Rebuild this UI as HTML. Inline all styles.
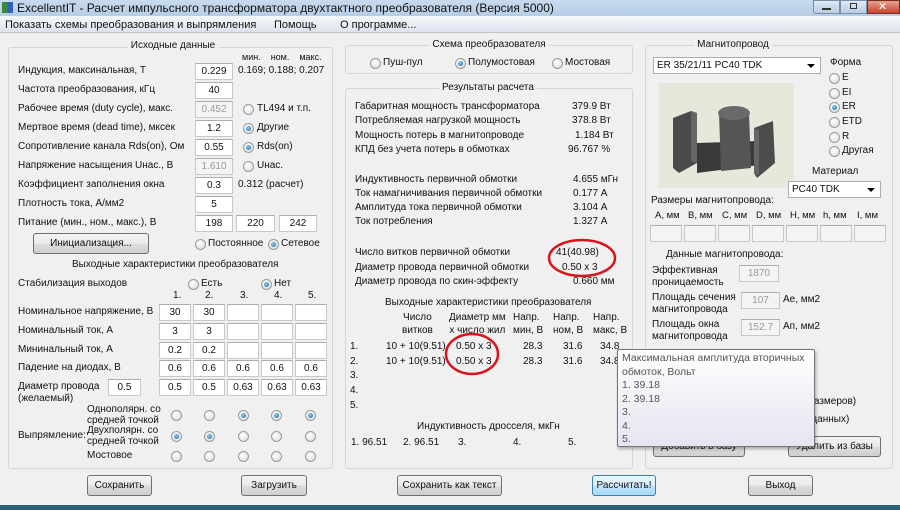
<!DOCTYPE html>
<html><head><meta charset="utf-8"><style>
*{margin:0;padding:0;box-sizing:border-box}
body{width:900px;height:510px;position:relative;overflow:hidden;background:#f0f0f0;font-family:"Liberation Sans","DejaVu Sans",sans-serif;font-size:10px;color:#111}
.a{position:absolute;white-space:nowrap;line-height:14px;font-size:10px}
.in{position:absolute;height:17px;background:#fff;border:1px solid #c8c8c8;border-top-color:#adadad;text-align:center;line-height:15px;font-size:10px;white-space:nowrap}
.dis{color:#999;background:#f4f4f4}
.r{position:absolute;width:11px;height:11px;border-radius:50%;border:1px solid #9a9a9a;background:radial-gradient(circle at 40% 35%,#fff,#d8d8d8)}
.r.on::after{content:"";position:absolute;left:2px;top:2px;width:5px;height:5px;border-radius:50%;background:radial-gradient(circle at 40% 35%,#8fd0f5,#1a5f9a)}
.g{position:absolute;border:1px solid #d5d5d5;border-radius:3px}
.gt{position:absolute;background:#f0f0f0;padding:0 3px;line-height:14px;white-space:nowrap;transform:translateX(-50%);font-size:10px}
.btn{position:absolute;height:21px;border:1px solid #707070;border-radius:3px;background:linear-gradient(#f2f2f2 0%,#ebebeb 50%,#dddddd 51%,#cfcfcf 100%);text-align:center;line-height:19px;font-size:10px;white-space:nowrap}
.cb{position:absolute;height:17px;background:#fff;border:1px solid #abadb3;line-height:15px;padding-left:3px;font-size:10px;white-space:nowrap}
.cb::after{content:"";position:absolute;right:5px;top:6px;border:4px solid transparent;border-top:4px solid #000}
</style></head><body>
<!-- title bar -->
<div style="position:absolute;left:0;top:0;width:900px;height:16px;background:linear-gradient(#c9dbee,#b5cde6)"></div>
<div style="position:absolute;left:2px;top:2px;width:11px;height:11px;background:linear-gradient(90deg,#3a8a3a 50%,#3060c0 50%)"></div>
<div class="a" style="left:17px;top:1px;font-size:12px">ExcellentIT - Расчет импульсного трансформатора двухтактного преобразователя (Версия 5000)</div>
<div style="position:absolute;left:813px;top:0;width:27px;height:14px;border:1px solid #7890a8;border-radius:0 0 0 3px;background:linear-gradient(#dfe9f5,#b8cce2)"></div>
<div style="position:absolute;left:822px;top:8px;width:9px;height:2px;background:#333"></div>
<div style="position:absolute;left:840px;top:0;width:27px;height:14px;border:1px solid #7890a8;background:linear-gradient(#dfe9f5,#b8cce2)"></div>
<div style="position:absolute;left:850px;top:3px;width:7px;height:6px;border:1px solid #333"></div>
<div style="position:absolute;left:867px;top:0;width:33px;height:14px;border:1px solid #7a2b20;background:linear-gradient(#e8a090,#c8442e)"></div>
<div class="a" style="left:878px;top:0;color:#fff;font-weight:bold;font-size:11px">✕</div>
<!-- menu -->
<div style="position:absolute;left:0;top:16px;width:900px;height:17px;background:linear-gradient(#f5f7fb,#dde3ef);border-bottom:1px solid #c0c4cc"></div>
<div class="a" style="left:5px;top:18px;font-size:11px">Показать схемы преобразования и выпрямления</div>
<div class="a" style="left:274px;top:18px;font-size:11px">Помощь</div>
<div class="a" style="left:340px;top:18px;font-size:11px">О программе...</div>

<!-- LEFT -->
<div class="g" style="left:8px;top:47px;width:325px;height:422px"></div>
<div class="gt" style="left:173px;top:39px">Исходные данные</div>
<div class="a" style="left:242px;top:50px;font-size:9px">мин.&nbsp;&nbsp;&nbsp;&nbsp;ном.&nbsp;&nbsp;&nbsp;&nbsp;макс.</div>
<div class="a" style="left:18px;top:64px">Индукция, максинальная, Т</div>
<div class="a" style="left:18px;top:83px">Частота преобразования, кГц</div>
<div class="a" style="left:18px;top:102px">Рабочее время (duty cycle), макс.</div>
<div class="a" style="left:18px;top:121px">Мертвое время (dead time), мксек</div>
<div class="a" style="left:18px;top:140px">Сопротивление канала Rds(on), Ом</div>
<div class="a" style="left:18px;top:159px">Напряжение насыщения Uнас., В</div>
<div class="a" style="left:18px;top:178px">Коэффициент заполнения окна</div>
<div class="a" style="left:18px;top:197px">Плотность тока, А/мм2</div>
<div class="a" style="left:18px;top:216px">Питание (мин., ном., макс.), В</div>
<div class="in" style="left:195px;top:63px;width:38px">0.229</div>
<div class="in" style="left:195px;top:82px;width:38px">40</div>
<div class="in dis" style="left:195px;top:101px;width:38px">0.452</div>
<div class="in" style="left:195px;top:120px;width:38px">1.2</div>
<div class="in" style="left:195px;top:139px;width:38px">0.55</div>
<div class="in dis" style="left:195px;top:158px;width:38px">1.610</div>
<div class="in" style="left:195px;top:177px;width:38px">0.3</div>
<div class="in" style="left:195px;top:196px;width:38px">5</div>
<div class="in" style="left:195px;top:215px;width:38px">198</div>
<div class="in" style="left:236px;top:215px;width:39px">220</div>
<div class="in" style="left:279px;top:215px;width:38px">242</div>
<div class="a" style="left:238px;top:64px">0.169; 0.188; 0.207</div>
<div class="r" style="left:243px;top:104px"></div><div class="a" style="left:257px;top:102px">TL494 и т.п.</div>
<div class="r on" style="left:243px;top:123px"></div><div class="a" style="left:257px;top:121px">Другие</div>
<div class="r on" style="left:243px;top:142px"></div><div class="a" style="left:257px;top:140px">Rds(on)</div>
<div class="r" style="left:243px;top:161px"></div><div class="a" style="left:257px;top:159px">Uнас.</div>
<div class="a" style="left:238px;top:178px">0.312 (расчет)</div>
<div class="btn" style="left:33px;top:233px;width:116px">Инициализация...</div>
<div class="r" style="left:195px;top:239px"></div><div class="a" style="left:208px;top:237px">Постоянное</div>
<div class="r on" style="left:268px;top:239px"></div><div class="a" style="left:281px;top:237px">Сетевое</div>
<div class="a" style="left:72px;top:258px">Выходные характеристики преобразователя</div>
<div class="a" style="left:18px;top:277px">Стабилизация выходов</div>
<div class="r" style="left:188px;top:279px"></div><div class="a" style="left:201px;top:277px">Есть</div>
<div class="r on" style="left:261px;top:279px"></div><div class="a" style="left:274px;top:277px">Нет</div>
<div class="a" style="left:173px;top:289px">1.</div><div class="a" style="left:205px;top:289px">2.</div><div class="a" style="left:240px;top:289px">3.</div><div class="a" style="left:274px;top:289px">4.</div><div class="a" style="left:308px;top:289px">5.</div>
<div class="a" style="left:18px;top:305px">Номинальное напряжение, В</div>
<div class="a" style="left:18px;top:324px">Номинальный ток, А</div>
<div class="a" style="left:18px;top:343px">Мининальный ток, А</div>
<div class="a" style="left:18px;top:361px">Падение на диодах, В</div>
<div class="a" style="left:18px;top:380px">Диаметр провода</div>
<div class="a" style="left:18px;top:392px">(желаемый)</div>
<div class="in" style="left:108px;top:379px;width:33px">0.5</div>
<div class="in" style="left:159px;top:304px;width:32px">30</div><div class="in" style="left:193px;top:304px;width:32px">30</div><div class="in" style="left:227px;top:304px;width:32px"></div><div class="in" style="left:261px;top:304px;width:32px"></div><div class="in" style="left:295px;top:304px;width:32px"></div>
<div class="in" style="left:159px;top:323px;width:32px">3</div><div class="in" style="left:193px;top:323px;width:32px">3</div><div class="in" style="left:227px;top:323px;width:32px"></div><div class="in" style="left:261px;top:323px;width:32px"></div><div class="in" style="left:295px;top:323px;width:32px"></div>
<div class="in" style="left:159px;top:342px;width:32px">0.2</div><div class="in" style="left:193px;top:342px;width:32px">0.2</div><div class="in" style="left:227px;top:342px;width:32px"></div><div class="in" style="left:261px;top:342px;width:32px"></div><div class="in" style="left:295px;top:342px;width:32px"></div>
<div class="in" style="left:159px;top:360px;width:32px">0.6</div><div class="in" style="left:193px;top:360px;width:32px">0.6</div><div class="in" style="left:227px;top:360px;width:32px">0.6</div><div class="in" style="left:261px;top:360px;width:32px">0.6</div><div class="in" style="left:295px;top:360px;width:32px">0.6</div>
<div class="in" style="left:159px;top:379px;width:32px">0.5</div><div class="in" style="left:193px;top:379px;width:32px">0.5</div><div class="in" style="left:227px;top:379px;width:32px">0.63</div><div class="in" style="left:261px;top:379px;width:32px">0.63</div><div class="in" style="left:295px;top:379px;width:32px">0.63</div>
<div class="a" style="left:87px;top:404px;line-height:11px">Однополярн. со<br>средней точкой</div>
<div class="a" style="left:87px;top:425px;line-height:11px">Двухполярн. со<br>средней точкой</div>
<div class="a" style="left:18px;top:429px">Выпрямление:</div>
<div class="a" style="left:87px;top:449px">Мостовое</div>
<div class="r" style="left:171px;top:410px"></div><div class="r" style="left:204px;top:410px"></div><div class="r on" style="left:238px;top:410px"></div><div class="r on" style="left:271px;top:410px"></div><div class="r on" style="left:305px;top:410px"></div>
<div class="r on" style="left:171px;top:431px"></div><div class="r on" style="left:204px;top:431px"></div><div class="r" style="left:238px;top:431px"></div><div class="r" style="left:271px;top:431px"></div><div class="r" style="left:305px;top:431px"></div>
<div class="r" style="left:171px;top:451px"></div><div class="r" style="left:204px;top:451px"></div><div class="r" style="left:238px;top:451px"></div><div class="r" style="left:271px;top:451px"></div><div class="r" style="left:305px;top:451px"></div>
<div class="btn" style="left:87px;top:475px;width:65px">Сохранить</div>
<div class="btn" style="left:241px;top:475px;width:66px">Загрузить</div>

<!-- MIDDLE -->
<div class="g" style="left:345px;top:45px;width:288px;height:29px"></div>
<div class="gt" style="left:489px;top:38px">Схема преобразователя</div>
<div class="r" style="left:370px;top:58px"></div><div class="a" style="left:383px;top:56px">Пуш-пул</div>
<div class="r on" style="left:455px;top:58px"></div><div class="a" style="left:468px;top:56px">Полумостовая</div>
<div class="r" style="left:552px;top:58px"></div><div class="a" style="left:565px;top:56px">Мостовая</div>
<div class="g" style="left:345px;top:88px;width:288px;height:381px"></div>
<div class="gt" style="left:488px;top:81px">Результаты расчета</div>
<div class="a" style="left:355px;top:100px">Габаритная мощность трансформатора</div><div class="a" style="left:572px;top:100px">379.9 Вт</div>
<div class="a" style="left:355px;top:114px">Потребляемая нагрузкой мощность</div><div class="a" style="left:572px;top:114px">378.8 Вт</div>
<div class="a" style="left:355px;top:129px">Мощность потерь в магнитопроводе</div><div class="a" style="left:575px;top:129px">1.184 Вт</div>
<div class="a" style="left:355px;top:143px">КПД без учета потерь в обмотках</div><div class="a" style="left:568px;top:143px">96.767 %</div>
<div class="a" style="left:355px;top:173px">Индуктивность первичной обмотки</div><div class="a" style="left:573px;top:173px">4.655 мГн</div>
<div class="a" style="left:355px;top:187px">Ток намагничивания первичной обмотки</div><div class="a" style="left:573px;top:187px">0.177 А</div>
<div class="a" style="left:355px;top:201px">Амплитуда тока первичной обмотки</div><div class="a" style="left:573px;top:201px">3.104 А</div>
<div class="a" style="left:355px;top:215px">Ток потребления</div><div class="a" style="left:573px;top:215px">1.327 А</div>
<div class="a" style="left:355px;top:246px">Число витков первичной обмотки</div><div class="a" style="left:556px;top:246px">41(40.98)</div>
<div class="a" style="left:355px;top:261px">Диаметр провода первичной обмотки</div><div class="a" style="left:562px;top:261px">0.50 x 3</div>
<div class="a" style="left:355px;top:275px">Диаметр провода по скин-эффекту</div><div class="a" style="left:573px;top:275px">0.660 мм</div>
<div class="a" style="left:385px;top:296px">Выходные характеристики преобразователя</div>
<div class="a" style="left:402px;top:311px;line-height:13px;text-align:center">Число<br>витков</div>
<div class="a" style="left:449px;top:311px;line-height:13px;text-align:center">Диаметр мм<br>х число жил</div>
<div class="a" style="left:513px;top:311px;line-height:13px">Напр.<br>мин, В</div>
<div class="a" style="left:553px;top:311px;line-height:13px">Напр.<br>ном, В</div>
<div class="a" style="left:593px;top:311px;line-height:13px">Напр.<br>макс, В</div>
<div class="a" style="left:350px;top:340px">1.</div><div class="a" style="left:386px;top:340px">10 + 10(9.51)</div><div class="a" style="left:456px;top:340px">0.50 x 3</div><div class="a" style="left:523px;top:340px">28.3</div><div class="a" style="left:563px;top:340px">31.6</div><div class="a" style="left:600px;top:340px">34.8</div>
<div class="a" style="left:350px;top:355px">2.</div><div class="a" style="left:386px;top:355px">10 + 10(9.51)</div><div class="a" style="left:456px;top:355px">0.50 x 3</div><div class="a" style="left:523px;top:355px">28.3</div><div class="a" style="left:563px;top:355px">31.6</div><div class="a" style="left:600px;top:355px">34.8</div>
<div class="a" style="left:350px;top:369px">3.</div><div class="a" style="left:350px;top:384px">4.</div><div class="a" style="left:350px;top:399px">5.</div>
<div class="a" style="left:417px;top:420px">Индуктивность дросселя, мкГн</div>
<div class="a" style="left:351px;top:436px">1. 96.51</div><div class="a" style="left:403px;top:436px">2. 96.51</div><div class="a" style="left:458px;top:436px">3.</div><div class="a" style="left:513px;top:436px">4.</div><div class="a" style="left:568px;top:436px">5.</div>
<div class="btn" style="left:397px;top:475px;width:105px">Сохранить как текст</div>
<div class="btn" style="left:592px;top:475px;width:64px;border-color:#3c7fb1;background:linear-gradient(#eaf6fd,#d9f0fc 50%,#bee6fd 51%,#a7d9f5)">Рассчитать!</div>
<svg style="position:absolute;left:0;top:0" width="900" height="510"><ellipse cx="582" cy="258" rx="33" ry="18" fill="none" stroke="#d8141c" stroke-width="2.5"/><ellipse cx="472" cy="354" rx="26" ry="20" fill="none" stroke="#d8141c" stroke-width="2.5"/></svg>

<!-- RIGHT -->
<div class="g" style="left:645px;top:45px;width:248px;height:424px"></div>
<div class="gt" style="left:733px;top:38px">Магнитопровод</div>
<div class="cb" style="left:653px;top:57px;width:168px">ER 35/21/11 PC40 TDK</div>
<div style="position:absolute;left:659px;top:83px;width:135px;height:105px;background:#e8e7dc"></div>
<svg style="position:absolute;left:659px;top:83px" width="135" height="105"><polygon points="14,35 32,28 38,30 38,80 20,90 14,85" fill="#4a4a4a"/><polygon points="32,28 38,30 38,80 32,78" fill="#666"/><polygon points="38,60 100,58 100,82 38,90" fill="#3a3a3a"/><polygon points="60,30 90,30 92,85 62,88" fill="#555"/><ellipse cx="75" cy="30" rx="16" ry="7" fill="#6a6a6a"/><polygon points="95,45 114,38 116,80 98,95 95,90" fill="#4c4c4c"/><polygon points="95,45 100,47 100,92 95,90" fill="#666"/></svg>
<div class="a" style="left:830px;top:56px">Форма</div>
<div class="r" style="left:829px;top:73px"></div><div class="a" style="left:842px;top:71px">E</div>
<div class="r" style="left:829px;top:88px"></div><div class="a" style="left:842px;top:86px">EI</div>
<div class="r on" style="left:829px;top:102px"></div><div class="a" style="left:842px;top:100px">ER</div>
<div class="r" style="left:829px;top:117px"></div><div class="a" style="left:842px;top:115px">ETD</div>
<div class="r" style="left:829px;top:132px"></div><div class="a" style="left:842px;top:130px">R</div>
<div class="r" style="left:829px;top:146px"></div><div class="a" style="left:842px;top:144px">Другая</div>
<div class="a" style="left:812px;top:165px">Материал</div>
<div class="cb" style="left:788px;top:181px;width:93px">PC40 TDK</div>
<div class="a" style="left:651px;top:194px">Размеры магнитопровода:</div>
<div class="a" style="left:655px;top:209px;font-size:9.5px">A, мм</div><div class="a" style="left:688px;top:209px;font-size:9.5px">B, мм</div><div class="a" style="left:722px;top:209px;font-size:9.5px">C, мм</div><div class="a" style="left:756px;top:209px;font-size:9.5px">D, мм</div><div class="a" style="left:790px;top:209px;font-size:9.5px">H, мм</div><div class="a" style="left:823px;top:209px;font-size:9.5px">h, мм</div><div class="a" style="left:857px;top:209px;font-size:9.5px">I, мм</div>
<div class="in dis" style="left:650px;top:225px;width:32px"></div><div class="in dis" style="left:684px;top:225px;width:32px"></div><div class="in dis" style="left:718px;top:225px;width:32px"></div><div class="in dis" style="left:752px;top:225px;width:32px"></div><div class="in dis" style="left:786px;top:225px;width:32px"></div><div class="in dis" style="left:820px;top:225px;width:32px"></div><div class="in dis" style="left:854px;top:225px;width:32px"></div>
<div class="a" style="left:666px;top:248px">Данные магнитопровода:</div>
<div class="a" style="left:652px;top:265px;line-height:12px">Эффективная<br>проницаемость</div><div class="in dis" style="left:739px;top:265px;width:40px">1870</div>
<div class="a" style="left:652px;top:292px;line-height:12px">Площадь сечения<br>магнитопровода</div><div class="in dis" style="left:741px;top:292px;width:39px">107</div><div class="a" style="left:783px;top:293px">Ae, мм2</div>
<div class="a" style="left:652px;top:319px;line-height:12px">Площадь окна<br>магнитопровода</div><div class="in dis" style="left:741px;top:319px;width:39px">152.7</div><div class="a" style="left:783px;top:320px">Aп, мм2</div>
<div class="a" style="left:805px;top:395px">(размеров)</div>
<div class="a" style="left:808px;top:413px">(данных)</div>
<div class="btn" style="left:653px;top:436px;width:92px">Добавить в базу</div>
<div class="btn" style="left:788px;top:436px;width:93px">Удалить из базы</div>
<div style="position:absolute;left:617px;top:349px;width:198px;height:98px;border:1px solid #767676;border-radius:2px;background:linear-gradient(#ffffff,#e4e5f0);box-shadow:1px 2px 3px rgba(0,0,0,.3);color:#555;padding:2px 4px;line-height:13.5px;font-size:10.5px;white-space:nowrap;overflow:hidden">Максимальная амплитуда вторичных<br>обмоток, Вольт<br>1. 39.18<br>2. 39.18<br>3.<br>4.<br>5.</div>
<div class="btn" style="left:748px;top:475px;width:65px">Выход</div>
<div style="position:absolute;left:0;top:505px;width:900px;height:5px;background:#2d6376"></div>
</body></html>
